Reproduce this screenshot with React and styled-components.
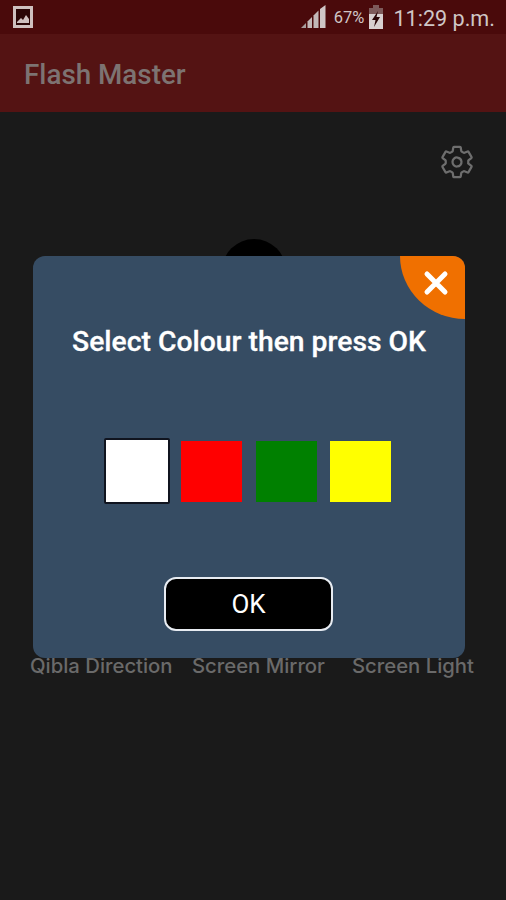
import React from 'react';
import styled, { createGlobalStyle } from 'styled-components';
import { IoSettingsOutline } from 'react-icons/io5';

const Global = createGlobalStyle`
  html, body {
    margin: 0;
    padding: 0;
    background: #1a1a1a;
  }
`;

const Screen = styled.div`
  position: relative;
  width: 506px;
  height: 900px;
  overflow: hidden;
  background: #1a1a1a;
  font-family: "Roboto", "Liberation Sans", sans-serif;
`;

const StatusBar = styled.div`
  height: 34px;
  padding: 0 11px 0 13px;
  display: flex;
  align-items: center;
  box-sizing: border-box;
  background: #4a0a0b;
  color: #cfc6c6;
`;

const StatusRight = styled.div`
  margin-left: auto;
  display: flex;
  align-items: center;
`;

const Percent = styled.span`
  margin: 0 4px 0 8px;
  font-size: 16.5px;
`;

const Clock = styled.span`
  margin: 2px 0 0 9px;
  font-size: 21.6px;
`;

const AppBar = styled.header`
  height: 78px;
  padding: 2px 24px 0;
  display: flex;
  align-items: center;
  box-sizing: border-box;
  background: #541313;
`;

const Title = styled.h1`
  margin: 0;
  font-size: 27.8px;
  font-weight: 500;
  color: #7d7372;
`;

const Content = styled.main`
  padding: 32px 32px 0 30px;
  display: flex;
  flex-direction: column;
`;

const Gear = styled(IoSettingsOutline)`
  align-self: flex-end;
  margin-right: -1px;
  width: 36px;
  height: 36px;
  color: #6e6e6e;
`;

const Badge = styled.div`
  align-self: center;
  margin: 59px 0 0 3px;
  width: 64px;
  height: 64px;
  border-radius: 50%;
  background: #000;
`;

const Labels = styled.div`
  margin-top: 350px;
  display: grid;
  grid-template-columns: 162px 160px auto;
`;

const Label = styled.span`
  font-family: "Inter", "Liberation Sans", sans-serif;
  font-size: 20.3px;
  font-weight: 500;
  white-space: nowrap;
  color: #6a6a6a;
`;

const Dialog = styled.section`
  position: absolute;
  left: 33px;
  top: 256px;
  width: 432px;
  height: 402px;
  display: flex;
  flex-direction: column;
  align-items: center;
  overflow: hidden;
  border-radius: 12px;
  background: #364c63;
`;

const CloseCorner = styled.button`
  position: absolute;
  top: 0;
  right: 0;
  width: 65px;
  height: 63px;
  padding: 0;
  display: flex;
  align-items: center;
  justify-content: center;
  border: 0;
  border-bottom-left-radius: 100%;
  background: #f07000;
`;

const CloseIcon = styled.svg`
  margin: -9px 0 0 7px;
  width: 26px;
  height: 26px;
`;

const DialogTitle = styled.h2`
  margin: 68px 0 0;
  font-size: 28.3px;
  line-height: 36px;
  font-weight: 500;
  color: #fff;
  -webkit-text-stroke: 0.3px #fff;
`;

const Swatches = styled.div`
  margin: 78px 0 0 -2.5px;
  height: 66px;
  display: flex;
  align-items: center;
  gap: 13.5px;
`;

const Swatch = styled.button`
  width: ${props => (props.selected ? '66px' : '61px')};
  height: ${props => (props.selected ? '66px' : '61px')};
  margin-right: ${props => (props.selected ? '-2.5px' : '0')};
  padding: 0;
  box-sizing: border-box;
  background: ${props => props.color};
  border: ${props => (props.selected ? 'solid 2px #10141f' : '0')};
  border-radius: ${props => (props.selected ? '2px' : '0')};
`;

const OkButton = styled.button`
  margin: 73px 0 0 -1px;
  width: 169px;
  height: 54px;
  box-sizing: border-box;
  font-family: inherit;
  font-size: 26px;
  color: #fff;
  background: #000;
  border: solid 2px #e8ecf2;
  border-radius: 12px;
`;

const PictureIcon = () => (
  <svg width="20" height="22" viewBox="0 0 20 22">
    <rect x="1.5" y="1.5" width="17" height="19" fill="#2a0506" stroke="#cfc0bf" strokeWidth="3" />
    <path d="M4 16 L8 12 L10 14 L13 9 L16 13 V17 H4 Z" fill="#cfc0bf" />
  </svg>
);

const SignalIcon = () => (
  <svg width="25" height="24" viewBox="0 0 25 24">
    <path d="M0 23 L5 18 V23 Z" fill="#a89c9c" />
    <path d="M6.5 16.5 L11 12 V23 H6.5 Z" fill="#c2b8b8" />
    <path d="M12.5 10.5 L17.5 5.5 V23 H12.5 Z" fill="#c2b8b8" />
    <path d="M19 4 L24.5 0 V23 H19 Z" fill="#cfc6c6" />
  </svg>
);

const BatteryIcon = () => (
  <svg width="16" height="24" viewBox="0 0 16 24">
    <path d="M5 0 H11 V3 H15 V9 H1 V3 H5 Z" fill="#7d5a5a" />
    <rect x="1" y="9" width="14" height="15" fill="#d8d0d0" />
    <path d="M10 6 L4 15 H7.5 L6 22 L12 12 H8.5 Z" fill="#2a0506" />
  </svg>
);

const colours = ['#ffffff', '#ff0000', '#008000', '#ffff00'];

export default function App() {
  return (
    <Screen>
      <Global />
      <StatusBar>
        <PictureIcon />
        <StatusRight>
          <SignalIcon />
          <Percent>67%</Percent>
          <BatteryIcon />
          <Clock>11:29 p.m.</Clock>
        </StatusRight>
      </StatusBar>
      <AppBar>
        <Title>Flash Master</Title>
      </AppBar>
      <Content>
        <Gear />
        <Badge />
        <Labels>
          <Label>Qibla Direction</Label>
          <Label>Screen Mirror</Label>
          <Label>Screen Light</Label>
        </Labels>
      </Content>
      <Dialog>
        <CloseCorner type="button" aria-label="close">
          <CloseIcon viewBox="0 0 26 26">
            <path d="M4 4 L22 22 M22 4 L4 22" stroke="#fff" strokeWidth="5" strokeLinecap="round" />
          </CloseIcon>
        </CloseCorner>
        <DialogTitle>Select Colour then press OK</DialogTitle>
        <Swatches>
          {colours.map((c, i) => (
            <Swatch key={c} type="button" color={c} selected={i === 0} />
          ))}
        </Swatches>
        <OkButton type="button">OK</OkButton>
      </Dialog>
    </Screen>
  );
}
